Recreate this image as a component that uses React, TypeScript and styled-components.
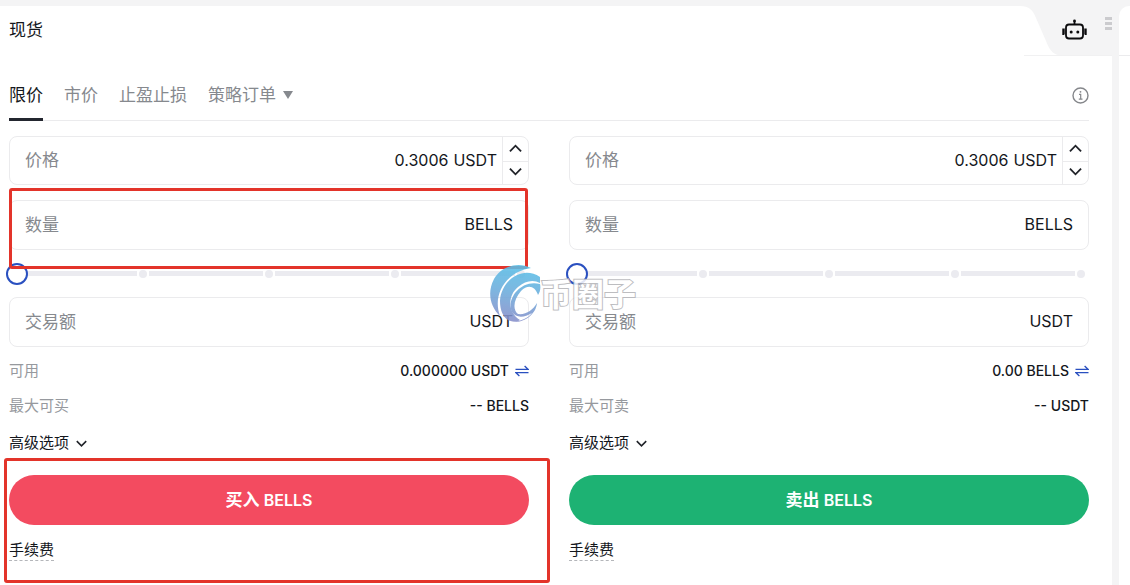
import React, { useId, useState } from "react";
import styled, { createGlobalStyle, css } from "styled-components";

const ink = "#14171c";
const muted = "#86898e";
const line = "#ebebed";
const blue = "#2a50c0";
const mark = "#e3342a";

const GlobalStyle = createGlobalStyle`
  *, *::before, *::after { box-sizing: border-box; }
  body {
    margin: 0;
    background: #f4f4f5;
    color: ${ink};
    font-family: Inter, "Noto Sans CJK SC", sans-serif;
    font-size: 16px;
  }
  button, input { font: inherit; color: inherit; }
  button { border: 0; padding: 0; background: none; cursor: pointer; }
  svg { display: block; }
`;

const Page = styled.div`
  display: flex;
  gap: 7px;
  min-height: 100vh;
  padding-top: 6px;
`;

const Panel = styled.main`
  position: relative;
  flex: 1;
  min-width: 0;
  background: #fff;
`;

const SidePanel = styled.aside`
  flex: 0 0 11px;
  background: #fff;
  border-top-left-radius: 10px;
  &::before {
    content: "";
    display: block;
    height: 50px;
    border-bottom: 1px solid ${line};
  }
`;

const Header = styled.header`
  display: flex;
  justify-content: space-between;
  height: 50px;
  padding-left: 9px;
`;

const Title = styled.h1`
  margin: 0;
  font-size: 17px;
  line-height: 49px;
  font-weight: 400;
`;

const Corner = styled.div`
  position: relative;
  display: flex;
  width: 92px;
  padding: 11px 0 0 42px;
  gap: 18px;
`;

const CornerShape = styled.svg`
  position: absolute;
  inset: 0;
`;

const CornerButton = styled.button`
  position: relative;
  flex: none;
  align-self: flex-start;
`;

const Body = styled.div`
  padding: 0 23px 24px 9px;
`;

const TabBar = styled.div`
  display: flex;
  align-items: flex-end;
  justify-content: space-between;
  height: 65px;
  margin-bottom: 15px;
  border-bottom: 1px solid ${line};
`;

const Tabs = styled.div`
  display: flex;
  gap: 21px;
  margin-bottom: -1px;
`;

const Tab = styled.button<{ $active?: boolean }>`
  display: flex;
  align-items: center;
  gap: 7px;
  height: 50px;
  padding-bottom: 2px;
  font-size: 17px;
  color: ${(p) => (p.$active ? ink : muted)};
  border-bottom: 3px solid ${(p) => (p.$active ? "#23262f" : "transparent")};
`;

const Caret = styled.svg`
  margin-top: 3px;
`;

const InfoButton = styled.button`
  margin-bottom: 16px;
`;

const Columns = styled.div`
  display: grid;
  grid-template-columns: 1fr 1fr;
  gap: 40px;
`;

const Form = styled.form`
  display: flex;
  flex-direction: column;
  min-width: 0;
`;

const outlined = css`
  content: "";
  position: absolute;
  border: 3px solid ${mark};
  border-radius: 3px;
  pointer-events: none;
  z-index: 2;
`;

const QuantityArea = styled.div<{ $marked?: boolean }>`
  position: relative;
  margin-top: 15px;
  ${(p) => p.$marked && css`&::after { ${outlined} inset: -12px 1px -19px 0; }`}
`;

const SubmitArea = styled.div<{ $marked?: boolean }>`
  position: relative;
  margin-top: 14px;
  ${(p) => p.$marked && css`&::after { ${outlined} inset: -17px -21px -22px -5px; }`}
`;

const Field = styled.div<{ $stepper?: boolean }>`
  display: flex;
  align-items: center;
  height: ${(p) => (p.$stepper ? 49 : 50)}px;
  padding-left: 15px;
  padding-right: ${(p) => (p.$stepper ? 0 : 15)}px;
  border: 1px solid ${line};
  border-radius: 8px;
  overflow: hidden;
`;

const FieldLabel = styled.label`
  flex: none;
  padding-bottom: 4px;
  font-size: 17px;
  color: ${muted};
`;

const FieldInput = styled.input`
  flex: 1;
  min-width: 0;
  padding: 0 5px 2px;
  border: 0;
  outline: 0;
  background: none;
  text-align: right;
`;

const Unit = styled.span`
  padding-bottom: 2px;
`;

const Stepper = styled.div`
  display: grid;
  grid-template-rows: 1fr 1fr;
  align-self: stretch;
  width: 26px;
  margin-left: 5px;
  border-left: 1px solid ${line};
`;

const StepButton = styled.button`
  display: flex;
  align-items: center;
  justify-content: center;
  & + & {
    padding-bottom: 2px;
    border-top: 1px solid ${line};
  }
`;

const SliderBox = styled.div`
  position: relative;
  display: flex;
  align-items: center;
  height: 47px;
  padding: 0 4px;
`;

const Segment = styled.i`
  flex: 1;
  height: 5px;
  margin: 0 2px;
  background: #ebebf0;
`;

const Stop = styled.i`
  flex: none;
  width: 8px;
  height: 8px;
  border-radius: 50%;
  background: #ebebf0;
`;

const Range = styled.input`
  position: absolute;
  inset: 12px -3px;
  margin: 0;
  appearance: none;
  background: transparent;
  &::-webkit-slider-thumb {
    appearance: none;
    width: 22px;
    height: 22px;
    border: 2px solid ${blue};
    border-radius: 50%;
    background: #fff;
  }
`;

const Rows = styled.dl`
  margin: 6px 0 0;
`;

const Row = styled.div`
  display: flex;
  align-items: center;
  justify-content: space-between;
  height: 35px;
  font-size: 15px;
`;

const RowLabel = styled.dt`
  padding-bottom: 2px;
  color: #96999e;
`;

const RowValue = styled.dd`
  display: flex;
  align-items: center;
  gap: 6px;
  margin: 0;
  font-size: 14px;
  font-weight: 500;
`;

const Advanced = styled.button`
  display: flex;
  align-items: center;
  align-self: flex-start;
  gap: 7px;
  height: 38px;
  padding-bottom: 2px;
  font-size: 15px;
  svg { margin-top: 4px; }
`;

const Submit = styled.button<{ $tone: string }>`
  display: block;
  width: 100%;
  height: 50px;
  padding-bottom: 4px;
  border-radius: 25px;
  background: ${(p) => p.$tone};
  color: #fff;
  font-size: 16px;
  font-weight: 600;
`;

const SubmitAction = styled.span`
  font-size: 17px;
`;

const FeeLink = styled.a`
  display: inline-block;
  margin-top: 14px;
  font-size: 15px;
  line-height: 21px;
  color: ${ink};
  text-decoration: none;
  border-bottom: 1px dashed #b4b6ba;
  vertical-align: top;
`;

const Watermark = styled.div`
  position: absolute;
  left: 50%;
  top: 258px;
  z-index: 3;
  display: flex;
  align-items: flex-start;
  margin-left: -66px;
  pointer-events: none;
`;

const WatermarkText = styled.span`
  margin-top: 9px;
  font-family: "Noto Sans CJK SC", sans-serif;
  font-size: 32px;
  line-height: 38px;
  font-weight: 700;
  color: #fff;
  opacity: 0.85;
  -webkit-text-stroke: 2px #b2b2b6;
  paint-order: stroke fill;
`;

const Chevron = ({ up, size = 13 }: { up?: boolean; size?: number }) => (
  <svg width={size} height={size} viewBox="0 0 14 14" fill="none" stroke="#202329" strokeWidth="2" aria-hidden="true">
    <path d={up ? "M1 10l6-6 6 6" : "M1 4l6 6 6-6"} />
  </svg>
);

const RobotIcon = () => (
  <svg width="25" height="24" viewBox="0 0 25 24" fill="none" stroke="#0b0b0d" strokeWidth="1.8" aria-hidden="true">
    <rect x="4" y="7.500" width="17" height="14" rx="3" />
    <path d="M12.500 7.500V4M1.200 11.500v6.500M23.800 11.500v6.500" />
    <path d="M2.800 11.500v6M22.200 11.500v6" strokeWidth="1" />
    <circle cx="12.500" cy="4" r="1.400" fill="#0b0b0d" stroke="none" />
    <circle cx="9.200" cy="15" r="1.500" fill="#0b0b0d" stroke="none" />
    <circle cx="15.800" cy="15" r="1.500" fill="#0b0b0d" stroke="none" />
  </svg>
);

const GripIcon = () => (
  <svg width="7" height="13" viewBox="0 0 7 13" fill="#cbcbce" aria-hidden="true">
    <path d="M0 0h7v3H0zM0 5h7v3H0zM0 10h7v3H0z" />
  </svg>
);

const InfoIcon = () => (
  <svg width="17" height="17" viewBox="0 0 17 17" fill="none" stroke="#85878b" strokeWidth="1.4" aria-hidden="true">
    <circle cx="8.5" cy="8.5" r="7.5" />
    <path d="M7 7.300h1.700V12M6.800 12.200h3.700" strokeWidth="1.2" />
    <circle cx="8.500" cy="4.800" r="0.900" fill="#85878b" stroke="none" />
  </svg>
);

const SwapIcon = () => (
  <svg width="14" height="12" viewBox="0 0 14 12" fill="none" stroke={blue} strokeWidth="1.3" aria-hidden="true">
    <path d="M0.500 4.300h12.500L9.600 1M13.500 7.700H1L4.400 11" />
  </svg>
);

const LogoMark = () => (
  <svg width="50" height="60" viewBox="0 0 50 60" overflow="visible" aria-hidden="true">
    <defs>
      <linearGradient id="swirl" gradientUnits="userSpaceOnUse" x1="30" y1="0" x2="20" y2="60">
        <stop offset="0" stopColor="#58c0e8" />
        <stop offset="0.450" stopColor="#6aaedd" />
        <stop offset="1" stopColor="#8a8bc8" />
      </linearGradient>
    </defs>
    <g fill="url(#swirl)" opacity="0.880">
      <path d="M41 4C27-3 11 3 4 15C-3 28 0 43 10 52C2 30 16 8 41 4Z" />
      <path d="M50 13C32 1 11 17 10 37C10 46 13 53 18 56C23 58 27 58 30 56C18 49 17 32 28 23C35 17 43 15 50 19Z" />
      <path d="M50 20C51 24 50 28 48 31C45 22 38 20 31 27C24 35 22 45 28 50C36 51 43 46 47 39C46 50 35 59 22 58C32 57 38 54 42 49C34 54 26 54 22 48C16 36 30 15 50 20Z" />
    </g>
  </svg>
);

type AmountProps = { label: string; unit: string };

const AmountField = ({ label, unit }: AmountProps) => {
  const id = useId();
  return (
    <Field>
      <FieldLabel htmlFor={id}>{label}</FieldLabel>
      <FieldInput id={id} inputMode="decimal" />
      <Unit>{unit}</Unit>
    </Field>
  );
};

const PriceField = () => {
  const id = useId();
  const [price, setPrice] = useState("0.3006");
  const step = (by: number) => setPrice((p) => (Number(p) + by).toFixed(4));
  return (
    <Field $stepper>
      <FieldLabel htmlFor={id}>价格</FieldLabel>
      <FieldInput id={id} value={price} onChange={(e) => setPrice(e.target.value)} />
      <Unit>USDT</Unit>
      <Stepper>
        <StepButton type="button" aria-label="+" onClick={() => step(0.0001)}><Chevron up /></StepButton>
        <StepButton type="button" aria-label="-" onClick={() => step(-0.0001)}><Chevron /></StepButton>
      </Stepper>
    </Field>
  );
};

type OrderProps = {
  action: string;
  tone: string;
  available: string;
  maxLabel: string;
  max: string;
  marked?: boolean;
};

const OrderForm = ({ action, tone, available, maxLabel, max, marked }: OrderProps) => {
  const [share, setShare] = useState(0);
  return (
    <Form onSubmit={(e) => e.preventDefault()}>
      <PriceField />
      <QuantityArea $marked={marked}>
        <AmountField label="数量" unit="BELLS" />
      </QuantityArea>
      <SliderBox>
        <Stop />
        {[1, 2, 3, 4].map((n) => (
          <React.Fragment key={n}>
            <Segment />
            <Stop />
          </React.Fragment>
        ))}
        <Range type="range" min={0} max={100} value={share} aria-label="数量" onChange={(e) => setShare(Number(e.target.value))} />
      </SliderBox>
      <AmountField label="交易额" unit="USDT" />
      <Rows>
        <Row>
          <RowLabel>可用</RowLabel>
          <RowValue>
            {available}
            <button type="button" aria-label="可用"><SwapIcon /></button>
          </RowValue>
        </Row>
        <Row>
          <RowLabel>{maxLabel}</RowLabel>
          <RowValue>{max}</RowValue>
        </Row>
      </Rows>
      <Advanced type="button">高级选项 <Chevron size={11} /></Advanced>
      <SubmitArea $marked={marked}>
        <Submit type="submit" $tone={tone}><SubmitAction>{action}</SubmitAction> BELLS</Submit>
        <FeeLink href="#fee">手续费</FeeLink>
      </SubmitArea>
    </Form>
  );
};

export default function App() {
  return (
    <>
      <GlobalStyle />
      <Page>
        <Panel>
          <Header>
            <Title>现货</Title>
            <Corner>
              <CornerShape width="92" height="50" viewBox="0 0 92 50" aria-hidden="true">
                <path d="M0 0C9 0 13 4 16 12L26 35C30 45 33 49 42 49.500H92V0Z" fill="#f4f4f5" />
                <path d="M4 49.500H92" stroke="#f1f1f2" />
              </CornerShape>
              <CornerButton type="button" aria-label="robot"><RobotIcon /></CornerButton>
              <CornerButton type="button" aria-label="menu"><GripIcon /></CornerButton>
            </Corner>
          </Header>
          <Body>
            <TabBar>
              <Tabs role="tablist">
                <Tab type="button" role="tab" aria-selected="true" $active>限价</Tab>
                <Tab type="button" role="tab" aria-selected="false">市价</Tab>
                <Tab type="button" role="tab" aria-selected="false">止盈止损</Tab>
                <Tab type="button" role="tab" aria-selected="false">
                  策略订单
                  <Caret width="10" height="8" viewBox="0 0 10 8" fill={muted} aria-hidden="true"><path d="M0 0h10L5 8z" /></Caret>
                </Tab>
              </Tabs>
              <InfoButton type="button" aria-label="info"><InfoIcon /></InfoButton>
            </TabBar>
            <Columns>
              <OrderForm action="买入" tone="#f34b60" available="0.000000 USDT" maxLabel="最大可买" max="-- BELLS" marked />
              <OrderForm action="卖出" tone="#1db273" available="0.00 BELLS" maxLabel="最大可卖" max="-- USDT" />
            </Columns>
          </Body>
          <Watermark>
            <LogoMark />
            <WatermarkText>币圈子</WatermarkText>
          </Watermark>
        </Panel>
        <SidePanel />
      </Page>
    </>
  );
}
